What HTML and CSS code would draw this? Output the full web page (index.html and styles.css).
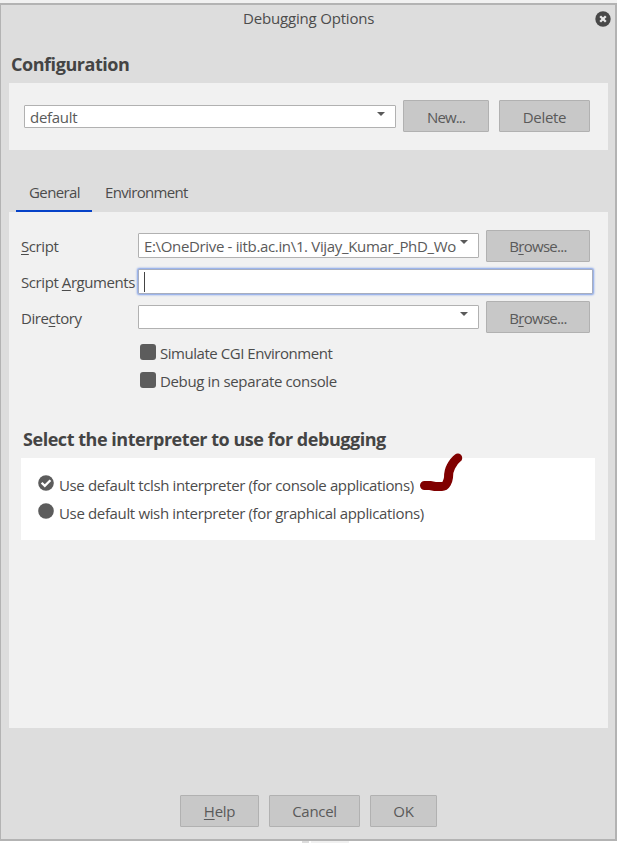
FILE: index.html
```html
<!DOCTYPE html>
<html lang="en">
<head>
<meta charset="utf-8">
<title>Debugging Options</title>
<link rel="stylesheet" href="styles.css">
</head>
<body>
<main class="window">
  <header class="titlebar">
    <span class="t-title">Debugging Options</span>
    <svg class="close" viewBox="0 0 16 16"><circle cx="8" cy="8" r="7.7" fill="#484848"/><path d="M5.2 5.2l5.600 5.600M10.800 5.200l-5.600 5.600" stroke="#e8e8e8" stroke-width="2.300"/></svg>
  </header>
  <h2 class="config-heading">Configuration</h2>
  <section class="config">
    <div class="combo combo-config"><span class="t-default">default</span><i class="arrow"></i></div>
    <button class="btn btn-new"><span class="t-new">New...</span></button>
    <button class="btn btn-delete"><span class="t-delete">Delete</span></button>
  </section>
  <nav class="tabs">
    <span class="tab active"><span class="t-general">General</span></span>
    <span class="tab"><span class="t-env">Environment</span></span>
  </nav>
  <section class="panel">
    <div class="row">
      <label><span class="t-script"><u>S</u>cript</span></label>
      <div class="combo combo-script"><span class="t-path">E:\OneDrive - iitb.ac.in\1. Vijay_Kumar_PhD_Wo</span><i class="arrow"></i></div>
      <button class="btn btn-browse"><span class="t-browse">B<u>r</u>owse...</span></button>
    </div>
    <div class="row">
      <label><span class="t-args">Script <u>A</u>rguments</span></label>
      <div class="field"><i class="caret"></i></div>
    </div>
    <div class="row">
      <label><span class="t-dir">Dire<u>c</u>tory</span></label>
      <div class="combo combo-dir"><i class="arrow"></i></div>
      <button class="btn btn-browse btn-dir"><span class="t-browse">B<u>r</u>owse...</span></button>
    </div>
    <div class="checks">
      <div class="check"><i class="box"></i><span class="t-cgi">Simulate CGI Environment</span></div>
      <div class="check"><i class="box"></i><span class="t-console">Debug in separate console</span></div>
    </div>
    <h2 class="interp-heading">Select the interpreter to use for debugging</h2>
    <div class="interp">
      <div class="radio">
        <svg viewBox="0 0 16 16"><circle cx="8" cy="8" r="7.8" fill="#5c5c5c"/><path d="M3.600 7.700l3.200 3.200 5.600-5.600" fill="none" stroke="#fff" stroke-width="2.300"/></svg>
        <span class="t-tclsh">Use default tclsh interpreter (for console applications)</span>
      </div>
      <div class="radio">
        <svg viewBox="0 0 16 16"><circle cx="8" cy="8" r="7.8" fill="#5c5c5c"/></svg>
        <span class="t-wish">Use default wish interpreter (for graphical applications)</span>
      </div>
      <svg class="mark" viewBox="0 0 50 46"><path d="M8.500 33.500H14L19 34.500H26C30 34.500 32 29.500 32.500 25.500C32.500 20 33 18 35 14.500C37 10.500 39 8 41.700 6" fill="none" stroke="#800000" stroke-width="9" stroke-linecap="round" stroke-linejoin="round"/></svg>
    </div>
  </section>
  <footer class="footer">
    <button class="btn btn-help"><span class="t-help"><u>H</u>elp</span></button>
    <button class="btn btn-cancel"><span class="t-cancel">Cancel</span></button>
    <button class="btn btn-ok"><span class="t-ok">OK</span></button>
  </footer>
</main>
<div class="below"><i class="dark"></i><i class="light"></i></div>
</body>
</html>
```

FILE: styles.css
```css
* { box-sizing: border-box; }
body {
  margin: 0;
  padding-top: 3px;
  width: 617px;
  height: 843px;
  overflow: hidden;
  background: #f1f1f1;
  font: 15px/20px "Open Sans", "Noto Sans", sans-serif;
  letter-spacing: -0.3px;
  color: #4c4c4c;
}
.window {
  height: 838px;
  display: flex;
  flex-direction: column;
  background: #ddd;
  border: solid #b3b3b3;
  border-width: 2px 2px 2px 1px;
}
span { white-space: nowrap; }
u { text-underline-offset: 2px; text-decoration-thickness: 1px; text-decoration-skip-ink: none; }
h2 { margin: 0; font-size: 18px; line-height: 24px; font-weight: 700; color: #444; white-space: nowrap; }

.titlebar { position: relative; height: 47px; padding: 3px 0 0 242px; }
.close { position: absolute; left: 593.5px; top: 5.500px; width: 16px; height: 16px; }
.config-heading { height: 31px; margin-left: 10px; letter-spacing: -0.45px; }
.config {
  display: flex;
  align-items: flex-start;
  height: 67px;
  margin: 0 7px 0 8px;
  padding: 17px 0 0 15px;
  background: #f1f1f1;
}
.btn {
  height: 32px;
  flex: none;
  display: flex;
  justify-content: center;
  align-items: center;
  padding: 2px 0 0;
  font: inherit;
  letter-spacing: inherit;
  color: #5a5a5a;
  background: #c8c8c8;
  border: 1px solid #b1b1b1;
  border-radius: 1px;
}
.combo {
  position: relative;
  display: flex;
  align-items: center;
  flex: none;
  padding: 1px 0 0 5px;
  background: #fff;
  border: 1px solid #b1b1b1;
  border-radius: 1px;
  color: #5a5a5a;
}
.arrow {
  position: absolute;
  right: 10px;
  top: 6px;
  border: solid transparent;
  border-width: 4px 4px 0;
  border-top-color: #5a5a5a;
}
.combo-config { width: 372px; height: 23px; margin: 5px 7px 0 0; }
.btn-new { width: 86px; margin-right: 10px; }
.btn-delete { width: 91px; }

.tabs { display: flex; height: 62px; padding: 30px 0 0 15px; }
.tab { width: 76px; height: 32px; padding: 2px 0 0 13px; }
.active { border-bottom: 2px solid #0642c8; }
.panel {
  height: 516px;
  margin: 0 7px 0 8px;
  padding: 15px 0 0 12px;
  background: #f1f1f1;
}
.row { display: flex; align-items: center; height: 36px; }
.row label { width: 117px; flex: none; padding-top: 2px; }
.row .btn { margin: 2px 0 0 7px; padding-top: 0; }
.row .btn-dir { margin-top: 0; padding-top: 2px; }
.combo-script { width: 341px; height: 25px; }
.combo-dir { width: 341px; height: 24px; }
.field {
  width: 455px;
  height: 25px;
  padding: 2px 0 0 5px;
  background: #fff;
  border: 1px solid #a7aebf;
  border-radius: 1px;
  box-shadow: 0 0 2px 1px #7f9fe8;
}
.caret { display: block; width: 1px; height: 20px; background: #444; }
.checks { margin: 8px 0 0 119px; }
.check { display: flex; height: 28px; }
.box { width: 16px; height: 16px; margin: 1px 4px 0 0; border-radius: 3px; background: #5c5c5c; }
.interp-heading { margin: 28px 0 0 2px; height: 31px; letter-spacing: -0.46px; }
.interp { position: relative; width: 574px; height: 82px; padding: 17px 0 0 17px; background: #fff; }
.radio { display: flex; height: 28px; }
.radio svg { width: 16px; height: 16px; margin-right: 5px; flex: none; }
.mark { position: absolute; left: 395px; top: -6px; width: 50px; height: 46px; }
.footer { display: flex; gap: 10px; padding: 67px 0 0 179px; }
.footer .btn { padding-top: 0; }
.btn-browse { width: 104px; }
.btn-help { width: 79px; }
.btn-cancel { width: 91px; }
.btn-ok { width: 67px; }
.below { display: flex; gap: 2px; height: 2px; padding-left: 302px; background: #fff; }
.dark { width: 7px; background: #ddd; }
.light { width: 38px; background: #f1f1f1; }

.t-title { letter-spacing: -0.18px; }
.t-new { letter-spacing: -0.85px; }
.t-general { letter-spacing: -0.6px; }
.t-env { letter-spacing: -0.66px; }
.t-script, .t-dir { letter-spacing: -0.42px; }
.t-args { letter-spacing: -0.42px; }
.t-path { letter-spacing: -0.34px; }
.t-browse { letter-spacing: -0.72px; }
.t-cgi { letter-spacing: -0.46px; }
.t-console { letter-spacing: -0.35px; }
.t-tclsh { letter-spacing: -0.37px; }
.t-wish { letter-spacing: -0.35px; }
```
